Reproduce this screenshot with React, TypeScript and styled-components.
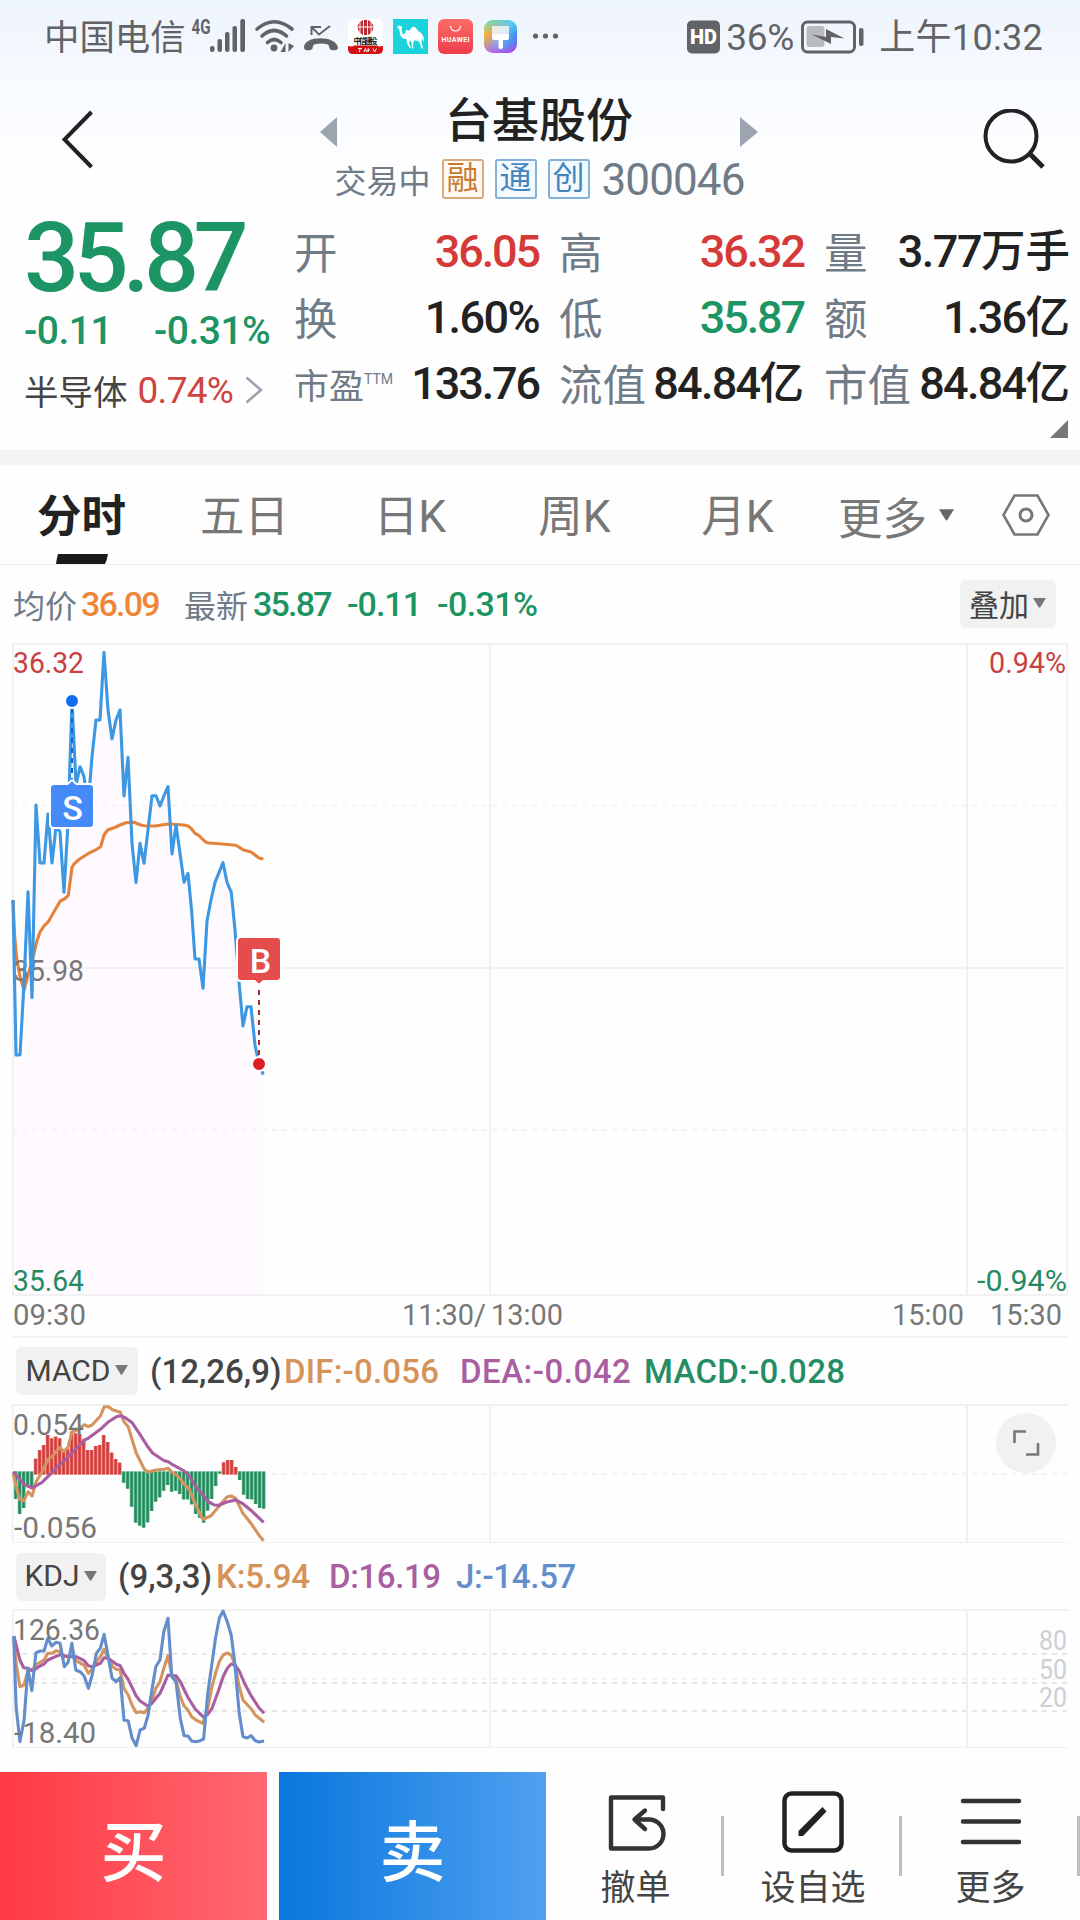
import React from "react";
import styled, { createGlobalStyle } from "styled-components";

const INK = "#222222";
const SLATE = "#6f7b87";
const GREY = "#777777";
const RED = "#d63a38";
const GREEN = "#1c9463";
const GRID = "#f1f1f2";
const FONT = `Roboto, "Noto Sans CJK SC", sans-serif`;

const Global = createGlobalStyle`
  * { box-sizing: border-box; }
  body { margin: 0; background: #fefefe; font-family: ${FONT}; }
  svg { display: block; }
`;

const Page = styled.main`
  width: 1080px;
  height: 1920px;
  overflow: hidden;
  display: flex;
  flex-direction: column;
  background: linear-gradient(#eef4fd 0, #f8fbff 90px, #fefefe 190px);
`;

/* ---------- status bar ---------- */
const StatusBar = styled.header`
  height: 74px;
  padding: 0 37px 0 44px;
  display: flex;
  justify-content: space-between;
  align-items: center;
  color: #626366;
`;
const StatusGroup = styled.div`
  display: flex;
  align-items: center;
  height: 74px;
`;
const StatusText = styled.span<{ $size: number; $track?: number }>`
  font-size: ${(p) => p.$size}px;
  line-height: 74px;
  padding-top: 2px;
  white-space: nowrap;
  letter-spacing: ${(p) => p.$track ?? 0}px;
`;
const Carrier = styled(StatusText)`
  width: 146px;
`;

/* ---------- title bar ---------- */
const TitleBar = styled.section`
  height: 132px;
  padding: 17px 35px 0 61px;
  display: grid;
  grid-template-columns: 33px 1fr 63px;
`;
const TitleIcon = styled.div`
  padding-top: 18px;
`;
const TitleCenter = styled.div`
  display: flex;
  flex-direction: column;
  align-items: center;
`;
const NameRow = styled.div`
  display: flex;
  width: 438px;
  height: 60px;
  justify-content: space-between;
  align-items: center;
  margin-left: 2px;
`;
const StepIcon = styled.div`
  padding-top: 22px;
`;
const StockName = styled.h1`
  margin: 0;
  font-size: 47px;
  line-height: 60px;
  font-weight: 500;
  color: ${INK};
`;
const CodeRow = styled.div`
  display: flex;
  align-items: center;
  height: 48px;
  margin: 4px 0 0 3px;
  gap: 11px;
  font-size: 32px;
  color: ${SLATE};
`;
const Tag = styled.span<{ $hue: string; $bg: string }>`
  width: 42px;
  height: 40px;
  border: 2px solid ${(p) => p.$hue}a0;
  border-radius: 3px;
  background: ${(p) => p.$bg};
  color: ${(p) => p.$hue};
  font-size: 32px;
  line-height: 35px;
  text-align: center;
`;
const Code = styled.span`
  font-size: 44px;
  line-height: 48px;
  padding-top: 2px;
  letter-spacing: -0.9px;
  margin-left: 1px;
`;

/* ---------- quote ---------- */
const Quote = styled.section`
  height: 244px;
  display: grid;
  grid-template-columns: 294px 245px 265px 266px;
`;
const Main = styled.div`
  padding-left: 24px;
  display: flex;
  flex-direction: column;
`;
const Price = styled.div`
  height: 98px;
  margin-top: 3px;
  font-size: 97px;
  line-height: 98px;
  font-weight: 500;
  letter-spacing: -5.7px;
  color: ${GREEN};
`;
const Change = styled.div`
  display: flex;
  height: 46px;
  font-size: 39px;
  line-height: 48px;
  font-weight: 500;
  color: ${GREEN};
  letter-spacing: -0.5px;
`;
const ChangeCell = styled.span`
  min-width: 130px;
`;
const Sector = styled.div`
  display: flex;
  align-items: center;
  height: 60px;
  margin-top: 7px;
  color: #444;
  font-size: 34.5px;
`;
const SectorPct = styled.span`
  margin: 0 12px 0 10px;
  font-size: 37px;
  letter-spacing: -0.7px;
  color: #cf4340;
`;
const StatColumn = styled.div<{ $left: number }>`
  padding: 13px 0 0 ${(p) => p.$left}px;
`;
const Stat = styled.div`
  height: 66px;
  display: flex;
  align-items: flex-start;
  justify-content: space-between;
  white-space: nowrap;
`;
const StatLabel = styled.span<{ $small?: boolean }>`
  font-size: ${(p) => (p.$small ? 35 : 43.5)}px;
  line-height: 66px;
  padding-top: ${(p) => (p.$small ? 4 : 3)}px;
  color: ${SLATE};
`;
const Sup = styled.sup`
  font-size: 14px;
  line-height: 0;
  vertical-align: 15px;
`;
const StatValue = styled.span<{ $tone?: string; $track?: number }>`
  font-size: 45px;
  line-height: 66px;
  font-weight: 500;
  letter-spacing: ${(p) => p.$track ?? -2.1}px;
  color: ${(p) => p.$tone ?? INK};
`;
const Unit = styled.span`
  font-size: 44.5px;
  letter-spacing: 0;
`;
const Corner = styled.div`
  display: flex;
  justify-content: flex-end;
  padding: 3px 2px 0 0;
`;
const Band = styled.div`
  height: 15px;
  background: #f4f4f4;
`;

/* ---------- period tabs ---------- */
const Tabs = styled.nav`
  height: 100px;
  display: grid;
  grid-template-columns: 163px 163px 168px 161px 165px 182px 78px;
  border-bottom: 1px solid #efefef;
`;
const Tab = styled.div<{ $active?: boolean }>`
  display: flex;
  flex-direction: column;
  align-items: center;
  justify-content: space-between;
  padding-top: 8px;
  font-size: 44.5px;
  line-height: 81px;
  height: 99px;
  white-space: nowrap;
  font-weight: ${(p) => (p.$active ? 700 : 400)};
  color: ${(p) => (p.$active ? INK : GREY)};
`;
const TabText = styled.span`
  height: 81px;
  line-height: 88px;
`;
const MoreTab = styled.div`
  display: flex;
  align-items: center;
  padding: 12px 0 0 18px;
  gap: 12px;
  height: 88px;
  font-size: 44.5px;
  color: ${GREY};
`;
const Settings = styled.div`
  padding-top: 29px;
`;

/* ---------- legends ---------- */
const Legend = styled.div<{ $h: number; $pad: number; $size: number }>`
  height: ${(p) => p.$h}px;
  padding-left: ${(p) => p.$pad}px;
  display: flex;
  align-items: center;
  font-size: ${(p) => p.$size}px;
  font-weight: 500;
  white-space: nowrap;
`;
const Item = styled.span<{ $w: number; $tone: string; $track?: number; $cjk?: boolean }>`
  width: ${(p) => p.$w}px;
  color: ${(p) => p.$tone};
  letter-spacing: ${(p) => p.$track ?? 0}px;
  font-size: ${(p) => (p.$cjk ? "32px" : "inherit")};
  font-weight: ${(p) => (p.$cjk ? 400 : 500)};
`;
const Picker = styled.button<{ $w: number; $mr?: number }>`
  width: ${(p) => p.$w}px;
  height: 48px;
  margin: 0 ${(p) => p.$mr ?? 0}px 0 0;
  padding: 0 1px 2px 0;
  border: 0;
  border-radius: 6px;
  background: #f1f1f1;
  color: #444;
  display: flex;
  align-items: center;
  justify-content: center;
  gap: 4px;
  font: 400 30px ${FONT};
`;
const Spacer = styled.span`
  flex: 1;
`;
const Divider = styled.hr`
  width: 1056px;
  height: 2px;
  margin: 0 12px;
  border: 0;
  background: #f3f3f3;
`;

/* ---------- bottom bar ---------- */
const BottomBar = styled.footer`
  height: 148px;
  margin-top: 23px;
  display: grid;
  grid-template-columns: 267px 267px 1fr;
  column-gap: 12px;
`;
const Trade = styled.button<{ $from: string; $to: string }>`
  border: 0;
  padding: 2px 0 0;
  background: linear-gradient(90deg, ${(p) => p.$from}, ${(p) => p.$to});
  color: #fff;
  font: 500 66px ${FONT};
`;
const Tools = styled.div`
  display: grid;
  grid-template-columns: 166px 178px 178px;
`;
const Tool = styled.div<{ $left?: number; $right?: number }>`
  height: 104px;
  margin-top: 44px;
  padding: 0 ${(p) => p.$right ?? 0}px 0 ${(p) => p.$left ?? 0}px;
  border-style: solid;
  border-color: transparent;
  border-image: linear-gradient(#bfbfbf 60px, transparent 60px) 1;
  border-width: 0 3px 0 0;
  display: flex;
  flex-direction: column;
  align-items: center;
  color: #444;
  font-size: 35px;
  line-height: 44px;
`;
const ToolIcon = styled.div`
  height: 62px;
  margin: -25px 0 14px;
`;

/* ---------- small glyphs ---------- */
const Down = ({ w = 13, h = 10, fill = GREY }: { w?: number; h?: number; fill?: string }) => (
  <svg width={w} height={h} viewBox="0 0 13 10"><path d="M0 0H13L7.5 9Q6.5 10.5 5.5 9Z" fill={fill} /></svg>
);

const StatusIcons = () => (
  <svg width="370" height="74" viewBox="190 0 370 74" fill="#626366">
    <defs>
      <linearGradient id="theme" x1="0" y1="0.2" x2="1" y2="0.8">
        <stop offset="0" stopColor="#f9c92f" /><stop offset=".25" stopColor="#f5a04c" />
        <stop offset=".5" stopColor="#9ba7e9" /><stop offset=".75" stopColor="#3f9cf5" /><stop offset="1" stopColor="#6b4bea" />
      </linearGradient>
      <linearGradient id="themeTop" x1="0" y1="0" x2="0" y2="1">
        <stop offset="0" stopColor="#43e0e8" stopOpacity=".8" /><stop offset=".45" stopColor="#43e0e8" stopOpacity="0" />
        <stop offset="1" stopColor="#d83be0" stopOpacity=".7" />
      </linearGradient>
      <linearGradient id="hw" x1="0" y1="0" x2="0" y2="1">
        <stop offset="0" stopColor="#fc6d67" /><stop offset="1" stopColor="#ee3d4b" />
      </linearGradient>
    </defs>
    <text x="191.500" y="34" fontSize="20" fontWeight="700" textLength="19" lengthAdjust="spacingAndGlyphs">4G</text>
    <rect x="210" y="46" width="4.500" height="6" rx="2" /><rect x="217.500" y="39" width="4.500" height="13" rx="2" />
    <rect x="225" y="32" width="4.500" height="20" rx="2" /><rect x="232.500" y="26" width="4.500" height="26" rx="2" />
    <rect x="240.300" y="19" width="4.700" height="33" rx="2" />
    <g fill="none" stroke="#626366" strokeWidth="3.600" strokeLinecap="round">
      <path d="M257 29Q274 14.500 292 29" /><path d="M262 36Q274 25 286.500 36" /><path d="M267.500 42.500Q274 36.500 281 42.500" />
    </g>
    <circle cx="274" cy="48" r="3.400" /><path d="M285.500 43V52H280.500ZM288.500 52V43L294 46Z" />
    <g fill="none" stroke="#626366" strokeWidth="2"><path d="M311.500 35V27H321M312 27.500L319 34.500L330 26" /></g>
    <path d="M304 48C303 35 337 35 338 48C338 51 330 51 329.500 48.500C329 46 329 45 327 44.300Q321 42.500 315 44.300C313 45 313 46 312.500 48.500C312 51 304 51 304 48Z" />
    <rect x="348" y="19" width="35" height="35" rx="5" fill="#fff" />
    <circle cx="365.500" cy="27.500" r="7.800" fill="#bd2b33" />
    <path d="M360 21.500V33.500M363.500 20V35M367.500 20V35M371 21.500V33.500" stroke="#fff" strokeWidth=".9" />
    <path d="M358 27H373" stroke="#fff" strokeWidth="1" />
    <text x="353.500" y="43.500" fontSize="8" fontWeight="700" fill="#222" textLength="24" fontFamily="Noto Sans CJK SC">中信建投</text>
    <path d="M348 46Q353 47 354 45.500H377Q378 47 383 46V49Q383 54 378 54H353Q348 54 348 49Z" fill="#d01214" />
    <path d="M358 48.500H362M360 48.500L359.500 52M364 52L365.500 48.500L366.500 52M368 52V48.500Q371 50 368 51M373 48.500L374.500 52L376.500 48.500" fill="none" stroke="#fff" strokeWidth="1" />
    <rect x="393" y="19" width="35" height="35" fill="#1cd3dc" />
    <path d="M397 27L399 25.500L402 26.500L401.500 28.500L402.500 34Q405 35 405.500 31Q407 29 409.500 31Q412 25.500 415 27Q417 29 418 31Q423 33 424 39L423.500 42.500L422.500 38L421.500 42L423 48.500H421.500L419 41.500Q416 40 414 40.500L413 44.500L413.500 48.500H412L411.500 43L410 40L409 43L411 48H409.500L407 43L406.500 39Q401 39 400 34L399.300 29.500Z" fill="#fff" />
    <rect x="438" y="19" width="35" height="35" rx="6" fill="url(#hw)" />
    <path d="M450.500 26Q451 31 455.500 31Q460 31 460.500 26" fill="none" stroke="#fff" strokeWidth="1.200" />
    <text x="441.500" y="42" fontSize="7" fontWeight="700" fill="#fff" textLength="28">HUAWEI</text>
    <rect x="484" y="20" width="33" height="33" rx="9" fill="url(#theme)" /><rect x="484" y="20" width="33" height="33" rx="9" fill="url(#themeTop)" />
    <path d="M492 26H509V35H492Z" fill="#fff" opacity=".75" /><path d="M492 34H509V38Q509 40 507 40H503V48Q500.500 50 498.500 48V40H494Q492 40 492 38Z" fill="#fff" />
    <circle cx="535.500" cy="36" r="2.600" /><circle cx="545.500" cy="36" r="2.600" /><circle cx="555.500" cy="36" r="2.600" />
  </svg>
);

const HdIcon = () => (
  <svg width="39" height="34" viewBox="0 0 39 34">
    <rect width="33" height="33" y=".5" rx="5" fill="#626366" />
    <text x="3" y="24" fontSize="20" fontWeight="900" fill="#fff" textLength="27" lengthAdjust="spacingAndGlyphs">HD</text>
  </svg>
);
const Battery = () => (
  <svg width="85" height="34" viewBox="0 0 85 34">
    <rect x="8.500" y="2" width="52" height="30" rx="5" fill="none" stroke="#626366" strokeWidth="3" />
    <rect x="12.500" y="6" width="18" height="21" rx="3" fill="#b9bbbf" />
    <path d="M18 14.500L32 17V9L50.500 18.500L37 17V24Z" fill="#626366" />
    <rect x="65" y="8" width="4.500" height="18" rx="2" fill="#626366" />
  </svg>
);

/* ---------- chart data ---------- */
type Pt = [number, number];
const line = (pts: Pt[], kx: number, y0: number) =>
  pts.map(([x, y]) => `${(x / kx).toFixed(1)},${(y0 + y / 3).toFixed(1)}`).join(" ");

const priceRaw: Pt[] = [[39,810],[48,1275],[60,1275],[72,1060],[84,785],[96,1103],[108,525],[120,699],[132,699],[144,552],[156,699],[168,590],[180,605],[192,787],[204,580],[216,212],[228,465],[240,410],[252,440],[264,530],[276,380],[288,270],[300,270],[312,67],[324,240],[336,327],[348,270],[360,240],[372,498],[384,382],[396,640],[408,758],[420,640],[432,700],[444,600],[456,497],[468,497],[480,528],[492,497],[504,470],[516,672],[528,585],[540,670],[552,757],[564,730],[575,845],[585,987],[597,987],[609,1075],[621,873],[633,810],[645,757],[657,728],[669,698],[681,757],[694,787],[705,900],[718,1065],[729,1188],[741,1130],[753,1130],[765,1245],[777,1302],[790,1334]];
const avgRaw: Pt[] = [[39,810],[44,920],[50,985],[60,1040],[72,1080],[84,1035],[96,995],[102,970],[110,935],[120,906],[132,888],[145,875],[165,840],[181,813],[193,807],[205,796],[216,712],[222,702],[240,686],[264,671],[290,658],[302,650],[312,615],[323,600],[348,591],[360,585],[378,578],[402,577],[420,584],[432,587],[465,588],[504,582],[552,585],[564,588],[573,595],[585,610],[597,617],[610,630],[621,638],[666,642],[708,646],[729,659],[753,666],[777,684],[790,687]];
const difRaw: Pt[] = [[37,640],[45,680],[55,718],[67,722],[79,695],[90,708],[101,665],[118,635],[135,597],[146,590],[158,573],[168,562],[178,574],[190,562],[202,515],[213,512],[225,503],[236,494],[247,500],[258,495],[281,468],[292,440],[304,440],[315,449],[337,457],[347,485],[359,500],[381,578],[404,628],[415,636],[437,630],[460,628],[471,625],[482,637],[494,645],[505,657],[516,673],[530,688],[550,740],[568,778],[590,768],[612,740],[635,711],[647,708],[660,715],[680,760],[704,792],[727,828],[738,842]];
const deaRaw: Pt[] = [[37,635],[50,652],[67,673],[90,684],[118,667],[145,638],[168,613],[190,592],[202,578],[236,540],[247,535],[281,508],[304,485],[326,470],[337,467],[352,474],[370,488],[390,520],[415,562],[427,579],[449,595],[460,602],[471,605],[482,613],[516,633],[530,648],[550,682],[568,706],[582,724],[600,735],[612,736],[635,726],[660,720],[680,731],[704,752],[738,787]];
const barsRaw = [717,762,744,680,680,596,570,555,525,535,530,535,575,568,515,520,522,538,570,570,558,555,525,546,578,597,608,668,686,740,788,797,803,787,753,725,712,692,675,695,692,702,718,718,733,762,773,788,752,717,678,641,607,600,600,621,660,704,717,718,732,744,746];
const jRaw: Pt[] = [[36,288],[42,500],[52,605],[63,540],[73,385],[83,452],[94,338],[105,333],[115,333],[125,295],[135,318],[146,307],[157,310],[168,380],[178,367],[188,310],[198,390],[210,396],[220,408],[231,445],[241,405],[252,340],[262,325],[272,283],[282,345],[293,415],[304,425],[314,413],[324,540],[335,543],[345,593],[356,617],[366,570],[377,565],[387,525],[397,450],[407,380],[418,360],[428,275],[439,235],[449,410],[460,425],[471,535],[481,587],[491,588],[501,603],[512,605],[523,602],[532,597],[543,460],[554,370],[563,295],[573,235],[583,213],[594,245],[604,285],[614,375],[625,520],[635,590],[646,594],[656,587],[667,602],[677,606],[690,603]];
const kRaw: Pt[] = [[36,295],[42,370],[52,440],[63,435],[73,392],[83,390],[97,372],[115,360],[125,340],[136,340],[147,332],[157,335],[168,350],[178,348],[188,345],[199,362],[220,376],[231,400],[241,387],[252,365],[262,350],[272,328],[283,355],[294,380],[304,388],[314,390],[324,446],[335,465],[345,495],[356,518],[366,515],[377,518],[387,505],[397,483],[407,445],[418,425],[428,385],[439,347],[449,405],[460,420],[471,470],[481,498],[491,510],[501,530],[512,540],[530,550],[543,505],[554,440],[563,400],[573,365],[583,345],[594,339],[604,345],[614,375],[625,440],[635,480],[656,506],[667,525],[690,547]];
const dRaw: Pt[] = [[36,288],[52,360],[62,383],[73,385],[86,393],[104,378],[115,372],[125,360],[157,344],[178,350],[199,350],[220,362],[231,377],[241,380],[262,370],[272,353],[283,355],[304,373],[314,377],[324,400],[335,418],[356,468],[366,483],[387,499],[397,490],[418,460],[428,435],[439,405],[449,407],[460,407],[471,425],[491,472],[510,507],[523,522],[532,531],[543,523],[554,505],[570,455],[583,410],[594,385],[604,372],[614,375],[625,393],[640,432],[656,467],[677,504],[690,520]];

const Series = ({ pts, color }: { pts: string; color: string }) => (
  <polyline points={pts} fill="none" stroke={color} strokeWidth="3.100" strokeLinejoin="round" />
);
const Label = ({ x, y, w, fill = GREY, children, size = 30 }: { x: number; y: number; w: number; fill?: string; children: string; size?: number }) => (
  <text x={x} y={y} fontSize={size} fill={fill} textLength={w} lengthAdjust="spacingAndGlyphs">{children}</text>
);

const PriceChart = () => {
  const price = line(priceRaw, 3, 630);
  return (
    <svg width="1080" height="694" viewBox="0 642 1080 694">
      <polygon points={`13,1295 ${price} 263.300,1295`} fill="#fefaff" />
      <g stroke={GRID} strokeWidth="2" fill="none">
        <path d="M12 644H1068M12 968H1068M12 1295H1068M13 644V1295M490 644V1295M967 644V1295M1067 644V1295" />
        <path d="M12 805.500H1068M12 1130H1068" strokeDasharray="5 5" strokeWidth="1.500" />
      </g>
      <Series pts={line(avgRaw, 3, 630)} color="#e5823a" />
      <Label x={13} y={981} w={71}>35.98</Label>
      <Series pts={price} color="#3d98e4" />
      <Label x={13} y={673} w={71} fill="#c8413e">36.32</Label>
      <Label x={13} y={1291} w={71} fill="#258a62">35.64</Label>
      <Label x={989} y={673} w={77} fill="#c8413e">0.94%</Label>
      <Label x={977} y={1291} w={90} fill="#258a62">-0.94%</Label>
      <Label x={13} y={1325} w={73}>09:30</Label>
      <Label x={402} y={1325} w={84}>11:30/</Label>
      <Label x={491} y={1325} w={72}>13:00</Label>
      <Label x={892} y={1325} w={72}>15:00</Label>
      <Label x={990} y={1325} w={72}>15:30</Label>
      <path d="M72 708V784" stroke="#0e62dc" strokeWidth="2" strokeDasharray="5 5" />
      <circle cx="72" cy="701" r="7" fill="#0f6bf0" stroke="#fff" strokeWidth="2" />
      <path d="M54 784H67.500L72 780L76.500 784H90Q94 784 94 788V824Q94 828 90 828H54Q50 828 50 824V788Q50 784 54 784Z" fill="#448af8" stroke="#fff" strokeWidth="2" />
      <text x="72.500" y="820" fontSize="34" fontWeight="500" fill="#fff" textAnchor="middle">S</text>
      <path d="M259 990V1056" stroke="#b0262c" strokeWidth="2" strokeDasharray="5 5" />
      <circle cx="259" cy="1064" r="7" fill="#dc1f24" stroke="#fff" strokeWidth="2" />
      <path d="M241 937H277Q281 937 281 941V977Q281 981 277 981H263.500L259 985L254.500 981H241Q237 981 237 977V941Q237 937 241 937Z" fill="#e44d4c" stroke="#fff" strokeWidth="2" />
      <text x="260.500" y="973" fontSize="34" fontWeight="500" fill="#fff" textAnchor="middle">B</text>
    </svg>
  );
};

const MacdChart = () => (
  <svg width="1080" height="140" viewBox="0 1404 1080 140">
    <g stroke={GRID} strokeWidth="2" fill="none">
      <path d="M12 1405H1068M490 1404V1542M967 1404V1542M12.500 1404V1542" />
      <path d="M12 1542.500H1068" strokeWidth="1" />
      <path d="M12 1474H1068" strokeDasharray="5 5" strokeWidth="1.500" />
    </g>
    {barsRaw.map((v, i) => {
      const up = v < 640;
      const end = 1260 + v / 3;
      const top = up ? end : 1471.5;
      const h = (up ? 1474.5 : end) - top;
      return (
        <g key={i}>
          <rect x={13.7 + i * 4} y={top} width="4" height={h} fill={up ? "#ef8480" : "#79cba5"} />
          <rect x={14.4 + i * 4} y={top} width="2.400" height={h} fill={up ? "#d03c3b" : "#23885c"} />
        </g>
      );
    })}
    <Series pts={line(difRaw, 2.8, 1260)} color="#d4945f" />
    <Series pts={line(deaRaw, 2.8, 1260)} color="#a95ea2" />
    <Label x={13} y={1435} w={71}>0.054</Label>
    <Label x={14} y={1538} w={83}>-0.056</Label>
    <circle cx="1026" cy="1443" r="30" fill="#f1f1f1" />
    <path d="M1014.500 1443V1431.500H1026M1026 1454.500H1038V1443" fill="none" stroke={GREY} strokeWidth="2.600" />
  </svg>
);

const KdjChart = () => (
  <svg width="1080" height="140" viewBox="0 1609 1080 140">
    <g stroke={GRID} strokeWidth="2" fill="none">
      <path d="M12 1610H1068M490 1609V1747M967 1609V1747M13 1609V1747" />
      <path d="M12 1747.500H1068" strokeWidth="1" />
      <path d="M12 1679H1068" strokeDasharray="5 5" strokeWidth="1.500" />
      <path d="M12 1654H1068M12 1683H1068M12 1711H1068" stroke="#e6e6e7" strokeDasharray="5 5" strokeWidth="2" />
    </g>
    <Series pts={line(kRaw, 2.613, 1540)} color="#d4945f" />
    <Series pts={line(dRaw, 2.613, 1540)} color="#a95ea2" />
    <Series pts={line(jRaw, 2.613, 1540)} color="#648ecb" />
    <Label x={13} y={1640} w={87}>126.36</Label>
    <Label x={14} y={1743} w={82}>-18.40</Label>
    <Label x={1039} y={1650} w={28} size={28} fill="#cccfd3">80</Label>
    <Label x={1039} y={1679} w={28} size={28} fill="#cccfd3">50</Label>
    <Label x={1039} y={1707} w={28} size={28} fill="#cccfd3">20</Label>
  </svg>
);

export default function App() {
  return (
    <Page>
      <Global />
      <StatusBar>
        <StatusGroup>
          <Carrier $size={35.4}>中国电信</Carrier>
          <StatusIcons />
        </StatusGroup>
        <StatusGroup>
          <HdIcon />
          <StatusText $size={37} $track={-0.2}>36%</StatusText>
          <Battery />
          <StatusText $size={36} $track={0.3}>上午10:32</StatusText>
        </StatusGroup>
      </StatusBar>

      <TitleBar>
        <TitleIcon>
          <svg width="33" height="60" viewBox="0 0 33 60"><path d="M30.500 3L3.500 30.500L30.500 58" fill="none" stroke={INK} strokeWidth="4" /></svg>
        </TitleIcon>
        <TitleCenter>
          <NameRow>
            <StepIcon><svg width="18" height="30" viewBox="0 0 18 30"><path d="M17 0V30L0 15Z" fill="#9ba4af" /></svg></StepIcon>
            <StockName>台基股份</StockName>
            <StepIcon><svg width="18" height="30" viewBox="0 0 18 30"><path d="M0 0V30L18 15Z" fill="#9ba4af" /></svg></StepIcon>
          </NameRow>
          <CodeRow>
            交易中
            <Tag $hue="#c67a33" $bg="#fffaf3">融</Tag>
            <Tag $hue="#4585be" $bg="#f3faff">通</Tag>
            <Tag $hue="#4585be" $bg="#f3faff">创</Tag>
            <Code>300046</Code>
          </CodeRow>
        </TitleCenter>
        <TitleIcon>
          <svg width="63" height="60" viewBox="0 0 63 60"><g fill="none" stroke={INK} strokeWidth="4"><circle cx="29" cy="27" r="25.500" /><path d="M47 44L61 58" strokeWidth="5" /></g></svg>
        </TitleIcon>
      </TitleBar>

      <Quote>
        <Main>
          <Price>35.87</Price>
          <Change><ChangeCell>-0.11</ChangeCell><span>-0.31%</span></Change>
          <Sector>
            半导体<SectorPct>0.74%</SectorPct>
            <svg width="18" height="28" viewBox="0 0 18 28"><path d="M1.500 1.500L16 14L1.500 26.500" fill="none" stroke="#9ba4af" strokeWidth="2.600" /></svg>
          </Sector>
        </Main>
        <StatColumn $left={0}>
          <Stat><StatLabel>开</StatLabel><StatValue $tone={RED}>36.05</StatValue></Stat>
          <Stat><StatLabel>换</StatLabel><StatValue $track={-1.6}>1.60%</StatValue></Stat>
          <Stat><StatLabel $small>市盈<Sup>TTM</Sup></StatLabel><StatValue>133.76</StatValue></Stat>
        </StatColumn>
        <StatColumn $left={20}>
          <Stat><StatLabel>高</StatLabel><StatValue $tone={RED}>36.32</StatValue></Stat>
          <Stat><StatLabel>低</StatLabel><StatValue $tone={GREEN}>35.87</StatValue></Stat>
          <Stat><StatLabel>流值</StatLabel><StatValue $track={-1.7}>84.84<Unit>亿</Unit></StatValue></Stat>
        </StatColumn>
        <StatColumn $left={20}>
          <Stat><StatLabel>量</StatLabel><StatValue $track={-1.5}>3.77<Unit>万手</Unit></StatValue></Stat>
          <Stat><StatLabel>额</StatLabel><StatValue $track={-1.7}>1.36<Unit>亿</Unit></StatValue></Stat>
          <Stat><StatLabel>市值</StatLabel><StatValue $track={-1.7}>84.84<Unit>亿</Unit></StatValue></Stat>
          <Corner><svg width="18" height="18" viewBox="0 0 18 18"><path d="M18 0V18H0Z" fill={GREY} /></svg></Corner>
        </StatColumn>
      </Quote>
      <Band />

      <Tabs>
        <Tab $active>
          <TabText>分时</TabText>
          <svg width="52" height="10" viewBox="0 0 52 10"><path d="M4 0H52Q51 6 49 10H0Q1 3 2 0Z" fill="#1b1b1b" /></svg>
        </Tab>
        <Tab><TabText>五日</TabText></Tab>
        <Tab><TabText>日K</TabText></Tab>
        <Tab><TabText>周K</TabText></Tab>
        <Tab><TabText>月K</TabText></Tab>
        <MoreTab>更多<Down w={15} h={12} fill="#666" /></MoreTab>
        <Settings>
          <svg width="48" height="42" viewBox="0 0 48 42"><g fill="none" stroke={GREY} strokeWidth="2.600"><path d="M12.500 1.500H35.500L46.500 21L35.500 40.500H12.500L1.500 21Z" /><circle cx="24" cy="21" r="6" strokeWidth="3" /></g></svg>
        </Settings>
      </Tabs>

      <Legend $h={77} $pad={13} $size={34}>
        <Item $cjk $w={68} $tone={SLATE}>均价</Item>
        <Item $w={103} $tone="#ee8639" $track={-1.8}>36.09</Item>
        <Item $cjk $w={69} $tone={SLATE}>最新</Item>
        <Item $w={94} $tone={GREEN} $track={-1.8}>35.87</Item>
        <Item $w={90} $tone={GREEN} $track={-1}>-0.11</Item>
        <Item $w={102} $tone={GREEN} $track={-0.6}>-0.31%</Item>
        <Spacer />
        <Picker $w={96} $mr={24}>叠加<Down /></Picker>
      </Legend>
      <PriceChart />
      <Divider />
      <Legend $h={66} $pad={16} $size={33}>
        <Picker $w={122} $mr={12}>MACD<Down /></Picker>
        <Item $w={134} $tone="#444">(12,26,9)</Item>
        <Item $w={176} $tone="#d5935a" $track={0.2}>DIF:-0.056</Item>
        <Item $w={184} $tone="#a95ea2" $track={0.5}>DEA:-0.042</Item>
        <Item $w={200} $tone="#248d63" $track={0.3}>MACD:-0.028</Item>
      </Legend>
      <MacdChart />
      <Legend $h={65} $pad={16} $size={33}>
        <Picker $w={90} $mr={12}>KDJ<Down /></Picker>
        <Item $w={98} $tone="#444">(9,3,3)</Item>
        <Item $w={113} $tone="#d5935a" $track={-0.2}>K:5.94</Item>
        <Item $w={127} $tone="#a95ea2" $track={-0.4}>D:16.19</Item>
        <Item $w={130} $tone="#648ecb" $track={-0.3}>J:-14.57</Item>
      </Legend>
      <KdjChart />

      <BottomBar>
        <Trade $from="#ff3a44" $to="#ff6871">买</Trade>
        <Trade $from="#0877dd" $to="#50a0f0">卖</Trade>
        <Tools>
          <Tool $right={8}>
            <ToolIcon><svg width="62" height="62" viewBox="0 0 62 62"><path d="M58 18V6.500H6V57.500H44A14.500 14.500 0 0 0 44 28.500H30M40 19.500L29.500 28.500L40 38" fill="none" stroke="#333" strokeWidth="4.400" strokeLinecap="round" strokeLinejoin="round" /></svg></ToolIcon>
            撤单
          </Tool>
          <Tool $left={3}>
            <ToolIcon><svg width="62" height="62" viewBox="0 0 62 62"><rect x="2.500" y="2.500" width="57" height="57" rx="7" fill="none" stroke={INK} strokeWidth="4.500" /><path d="M16.500 45V40L40.500 16L44.500 20.500L21 45Z" fill={INK} /></svg></ToolIcon>
            设自选
          </Tool>
          <Tool $left={2}>
            <ToolIcon><svg width="62" height="62" viewBox="0 0 62 62"><path d="M3 10H59M3 30.500H59M3 51H59" stroke="#333" strokeWidth="4.500" strokeLinecap="round" /></svg></ToolIcon>
            更多
          </Tool>
        </Tools>
      </BottomBar>
    </Page>
  );
}
